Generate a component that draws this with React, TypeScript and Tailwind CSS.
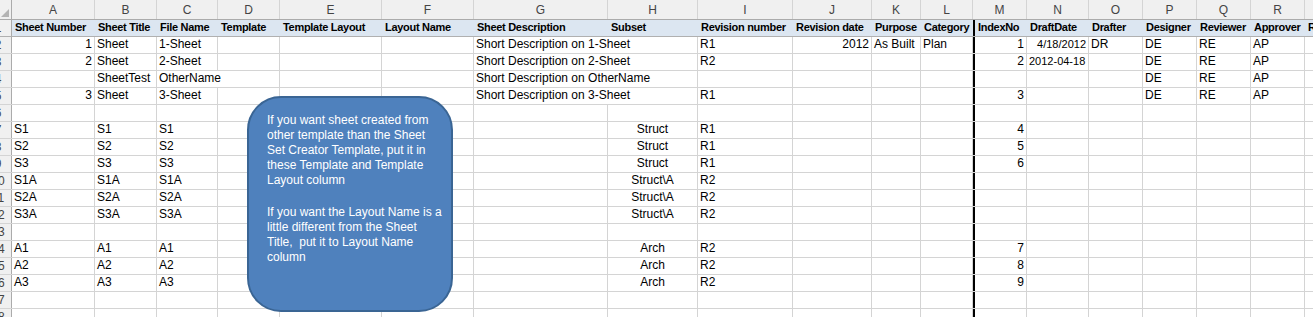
const cols = [
  { k: "A", w: "w-[83px]" },
  { k: "B", w: "w-[62px]" },
  { k: "C", w: "w-[61px]" },
  { k: "D", w: "w-[62px]" },
  { k: "E", w: "w-[102px]" },
  { k: "F", w: "w-[92px]" },
  { k: "G", w: "w-[134px]" },
  { k: "H", w: "w-[90px]" },
  { k: "I", w: "w-[95px]" },
  { k: "J", w: "w-[79px]" },
  { k: "K", w: "w-[49px]" },
  { k: "L", w: "w-[52px]" },
  { k: "M", w: "w-[54px]" },
  { k: "N", w: "w-[62px]" },
  { k: "O", w: "w-[54px]" },
  { k: "P", w: "w-[54px]" },
  { k: "Q", w: "w-[54px]" },
  { k: "R", w: "w-[54px]" },
  { k: "S", w: "w-[90px]" },
]

const headers = [
  "Sheet Number",
  "Sheet Title",
  "File Name",
  "Template",
  "Template Layout",
  "Layout Name",
  "Sheet Description",
  "Subset",
  "Revision number",
  "Revision date",
  "Purpose",
  "Category",
  "IndexNo",
  "DraftDate",
  "Drafter",
  "Designer",
  "Reviewer",
  "Approver",
  "RevisionHistory",
]

const blank = Array(19).fill("")

function row(vals: Record<string, string>) {
  return cols.map((c) => vals[c.k] ?? "")
}

const data: string[][] = [
  row({ A: "1", B: "Sheet", C: "1-Sheet", G: "Short Description on 1-Sheet", I: "R1", J: "2012", K: "As Built", L: "Plan", M: "1", N: "4/18/2012", O: "DR", P: "DE", Q: "RE", R: "AP" }),
  row({ A: "2", B: "Sheet", C: "2-Sheet", G: "Short Description on 2-Sheet", I: "R2", M: "2", N: "2012-04-18", P: "DE", Q: "RE", R: "AP" }),
  row({ B: "SheetTest", C: "OtherName", G: "Short Description on OtherName", P: "DE", Q: "RE", R: "AP" }),
  row({ A: "3", B: "Sheet", C: "3-Sheet", G: "Short Description on 3-Sheet", I: "R1", M: "3", P: "DE", Q: "RE", R: "AP" }),
  blank,
  row({ A: "S1", B: "S1", C: "S1", H: "Struct", I: "R1", M: "4" }),
  row({ A: "S2", B: "S2", C: "S2", H: "Struct", I: "R1", M: "5" }),
  row({ A: "S3", B: "S3", C: "S3", H: "Struct", I: "R1", M: "6" }),
  row({ A: "S1A", B: "S1A", C: "S1A", H: "Struct\\A", I: "R2" }),
  row({ A: "S2A", B: "S2A", C: "S2A", H: "Struct\\A", I: "R2" }),
  row({ A: "S3A", B: "S3A", C: "S3A", H: "Struct\\A", I: "R2" }),
  blank,
  row({ A: "A1", B: "A1", C: "A1", H: "Arch", I: "R2", M: "7" }),
  row({ A: "A2", B: "A2", C: "A2", H: "Arch", I: "R2", M: "8" }),
  row({ A: "A3", B: "A3", C: "A3", H: "Arch", I: "R2", M: "9" }),
  blank,
  blank,
]

// cells whose text spills into the empty cell on the right
const spills = new Set(["4-C", "2-G", "3-G", "4-G", "5-G"])

const note = [
  "If you want sheet created from",
  "other template than the Sheet",
  "Set Creator Template, put it in",
  "these Template and Template",
  "Layout column",
  "",
  "If you want the Layout Name is a",
  "little different from the Sheet",
  "Title,  put it to Layout Name",
  "column",
]

function align(col: string, v: string) {
  if (col === "H") return "justify-center"
  if (/^[\d/]+$/.test(v)) return "justify-end"
  return "justify-start"
}

export default function App() {
  return (
    <div
      className="relative w-[1313px] h-[317px] overflow-hidden bg-white text-[12px] text-black"
      style={{ fontFamily: '"Liberation Sans", Arial, sans-serif' }}
    >
      <div className="-ml-[15px] flex flex-col w-max">
        {/* column letters */}
        <div className="flex h-[20px] bg-[#f0f0f0] border-b border-[#ababab]">
          <div className="w-[27px] shrink-0 border-r border-[#ababab] flex items-end justify-end">
            <div className="w-0 h-0 mr-[2px] mb-[2px] border-l-[8px] border-l-transparent border-b-[8px] border-b-[#b4b4b4]" />
          </div>
          {cols.map((c) => (
            <div
              key={c.k}
              className={`${c.w} shrink-0 border-r border-[#d4d4d4] flex items-center justify-center text-[#444] text-[12px]`}
            >
              {c.k}
            </div>
          ))}
        </div>

        {/* header row */}
        <div className="flex h-[17px] border-b border-[#b0b0b0]">
          <div className="w-[27px] shrink-0 bg-[#f0f0f0] border-r border-[#ababab] flex items-center justify-center text-[#444]">
            1
          </div>
          {cols.map((c, i) => (
            <div
              key={c.k}
              className={`${c.w} shrink-0 bg-[#dce6f1] flex items-end pl-[3px] pb-[1px] font-bold text-[11px] tracking-[-0.3px] whitespace-nowrap overflow-hidden ${c.k === "M" ? "border-l-2 border-black pl-[1px]" : ""}`}
            >
              {headers[i]}
            </div>
          ))}
        </div>

        {data.map((r, ri) => {
          const n = ri + 2
          return (
            <div key={n} className="flex h-[17px] border-b border-[#d4d4d4]">
              <div className="w-[27px] shrink-0 bg-[#f0f0f0] border-r border-[#ababab] flex items-center justify-center text-[#444]">
                {n}
              </div>
              {cols.map((c, ci) => {
                const v = r[ci]
                const spill = spills.has(`${n}-${c.k}`)
                return (
                  <div
                    key={c.k}
                    className={`${c.w} shrink-0 flex items-end pb-[1px] px-[2px] whitespace-nowrap leading-[15px] ${align(c.k, v)} ${spill ? "overflow-visible border-r border-r-transparent" : "border-r border-[#d4d4d4] overflow-hidden"} ${c.k === "M" ? "border-l-2 border-l-black" : ""} ${c.k === "N" ? "text-[11px]" : ""}`}
                  >
                    {v}
                  </div>
                )
              })}
            </div>
          )
        })}
      </div>

      {/* callout shape over the sheet */}
      <div className="absolute left-[247px] top-[96px] w-[206px] h-[216px] rounded-[34px] bg-[#4f81bd] border-2 border-[#3a6594] pl-[18px] pt-[15px] text-white text-[12px] leading-[15px]">
        {note.map((l, i) => (
          <div key={i} className={`whitespace-pre ${l === "" ? "h-[17px]" : "h-[15px]"}`}>
            {l}
          </div>
        ))}
      </div>
    </div>
  )
}
